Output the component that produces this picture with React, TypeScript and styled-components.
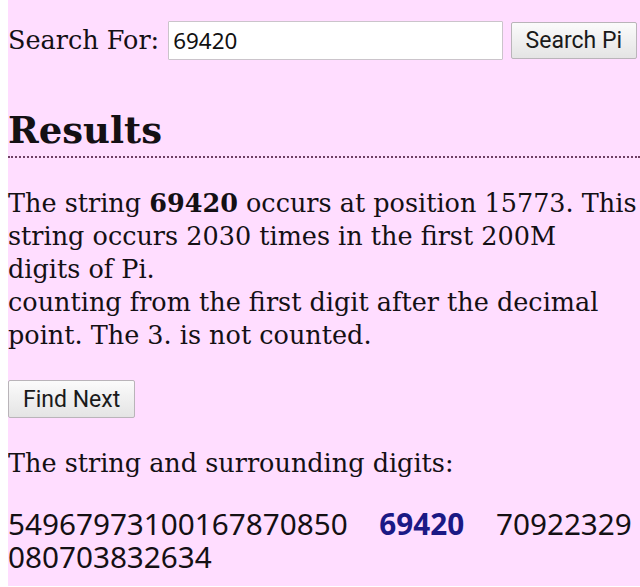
import React from "react";
import styled, { createGlobalStyle } from "styled-components";

const GlobalStyle = createGlobalStyle`
  html { background: #ffffff; }
  body {
    margin: 0 0 0 8px;
    background: #ffddff;
    color: #141014;
    font-family: "DejaVu Serif", serif;
  }
`;

const Page = styled.main`
  display: flex;
  flex-direction: column;
  padding-top: 21px;
  padding-bottom: 13px;
`;

const SearchForm = styled.form`
  display: flex;
  align-items: center;
  height: 39px;
  margin: 0 3px 0 0;
`;

const Label = styled.label`
  font-size: 25.5px;
  line-height: 33px;
  margin-right: 9px;
  white-space: nowrap;
`;

const SearchInput = styled.input`
  flex: 1;
  min-width: 0;
  height: 39px;
  box-sizing: border-box;
  border: 1px solid #cbc4cb;
  border-radius: 1px;
  background: #ffffff;
  padding: 0 4px;
  font-family: "Noto Sans", sans-serif;
  font-size: 22.4px;
  color: #111;
  outline: none;
`;

const Button = styled.button<{ $height: number }>`
  box-sizing: border-box;
  height: ${(p) => p.$height}px;
  padding: 0 14px;
  border: 1px solid #b9b4b9;
  border-radius: 2px;
  background: linear-gradient(#fbfbfb, #e4e4e4);
  color: #1a1a1a;
  font-family: Roboto, sans-serif;
  font-size: 23px;
  line-height: 1;
  cursor: pointer;
`;

const SearchButton = styled(Button)`
  margin-left: 8px;
`;

const FindButton = styled(Button)`
  align-self: flex-start;
  margin-top: 28px;
`;

const Heading = styled.h2`
  margin: 48px 0 0 0;
  padding-bottom: 4px;
  font-size: 37px;
  line-height: 44px;
  font-weight: bold;
  border-bottom: 2px dotted #6e4064;
`;

const Paragraph = styled.p<{ $top: number }>`
  margin: ${(p) => p.$top}px 0 0 0;
  font-size: 25.5px;
  line-height: 33px;
`;

const Digits = styled.div`
  margin-top: 27px;
  font-family: "Noto Sans", sans-serif;
  font-size: 29.7px;
  line-height: 33px;
  word-break: break-all;
`;

const Highlight = styled.b`
  color: #1b1985;
  font-weight: bold;
  margin: 0 24px;
`;

export default function App() {
  return (
    <Page>
      <GlobalStyle />
      <SearchForm onSubmit={(e) => e.preventDefault()}>
        <Label htmlFor="q">Search For:</Label>
        <SearchInput id="q" defaultValue="69420" />
        <SearchButton $height={37} type="submit">
          Search Pi
        </SearchButton>
      </SearchForm>
      <Heading>Results</Heading>
      <Paragraph $top={29}>
        The string <b>69420</b> occurs at position 15773. This string occurs
        2030 times in the first 200M {"digits\u00a0of\u00a0Pi."}
        <br />
        counting from the first digit after the decimal point. The 3. is not
        counted.
      </Paragraph>
      <FindButton $height={38} type="button">
        Find Next
      </FindButton>
      <Paragraph $top={29}>The string and surrounding digits:</Paragraph>
      <Digits>
        54967973100167870850 <Highlight>69420</Highlight> 70922329080703832634
      </Digits>
    </Page>
  );
}
